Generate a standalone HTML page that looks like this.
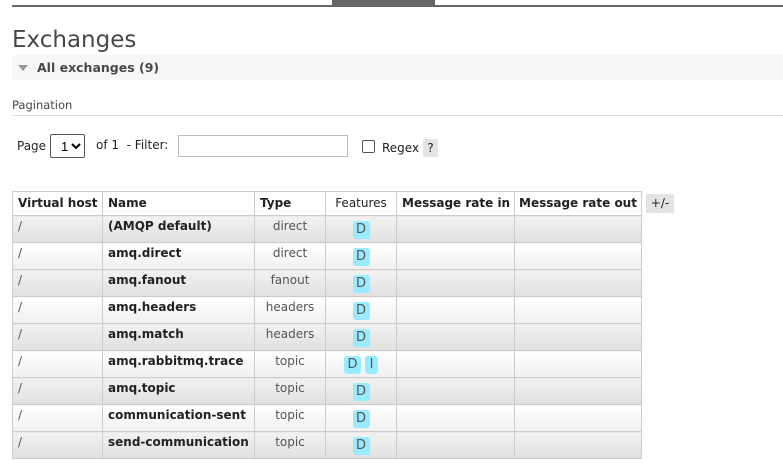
<!DOCTYPE html>
<html><head><style>
*{box-sizing:border-box;margin:0;padding:0}
body{width:783px;height:475px;overflow:hidden;background:#fff;font-family:"DejaVu Sans",Verdana,sans-serif;font-size:12px;color:#222;position:relative}
.abs{position:absolute}
.topline{left:12px;top:5px;width:771px;height:2px;background:#666}
.tab{left:332px;top:0;width:103px;height:6px;background:#666}
h1{position:absolute;left:12px;top:27px;font-weight:normal;font-size:23px;color:#484848;font-family:"DejaVu Sans",sans-serif}
.bar{left:12px;top:55px;width:771px;height:25px;background:#f7f7f7}
.bar span{position:absolute;left:25px;top:5px;font-weight:bold;font-size:12.5px;color:#484848}
.tri{position:absolute;left:6px;top:10px;width:0;height:0;border-left:5px solid transparent;border-right:5px solid transparent;border-top:6px solid #999}
.pag{left:12px;top:98px;width:771px;height:18px;border-bottom:1px solid #ddd;color:#484848;font-size:11.5px}
.ctl{top:136px;font-size:12px;color:#222}
select{position:absolute;left:50px;top:134px;width:35px;height:24px;border:1px solid #555;border-radius:2px;font-size:13px;padding-left:6px;background:#fff}
.inp{left:178px;top:135px;width:170px;height:22px;border:1px solid #bbb}
.chk{left:362px;top:140px;width:13px;height:13px;border:1px solid #555;border-radius:2px}
.q{left:423px;top:139px;width:15px;height:18px;background:#e4e4e4;text-align:center;font-size:12px;line-height:18px}
table{position:absolute;left:12px;top:191px;border-collapse:collapse;table-layout:fixed;width:629px}
td,th{border:1px solid #ccc;vertical-align:top;text-align:left;padding:3px 5px 0;height:27px;white-space:nowrap;overflow:hidden}
th{height:24px;font-weight:bold;padding-top:4px;background:#fff}
th.f{font-weight:normal;text-align:center}
tr.o td{background:linear-gradient(#f2f2f2,#e0e0e0)}
tr.e td{background:linear-gradient(#fff,#f0f0f0)}
td.n{font-weight:bold}
td.t{text-align:center;color:#555}
td.c{text-align:center;padding:5px 0 0}
td.v{color:#555}
.b{display:inline-block;width:17px;height:18px;background:#99ebff;border-radius:3px;text-align:center;line-height:18px;color:#555;margin:0 2px;font-size:13px}
.pm{left:646px;top:194px;width:28px;height:19px;background:#e4e4e4;text-align:center;line-height:19px}
</style></head><body>
<div class="abs topline"></div><div class="abs tab"></div>
<h1>Exchanges</h1>
<div class="abs bar"><div class="tri"></div><span>All exchanges (9)</span></div>
<div class="abs pag">Pagination</div>
<div class="abs ctl" style="left:17px;top:139px">Page</div>
<select><option>1</option></select>
<div class="abs ctl" style="left:96px;top:138px">of 1 &nbsp;- Filter:</div>
<div class="abs inp"></div>
<div class="abs chk"></div>
<div class="abs ctl" style="left:382px;top:141px">Regex</div>
<div class="abs q">?</div>
<table>
<colgroup><col style="width:90px"><col style="width:152px"><col style="width:71px"><col style="width:71px"><col style="width:118px"><col style="width:127px"></colgroup>
<tr><th>Virtual host</th><th>Name</th><th>Type</th><th class="f">Features</th><th>Message rate in</th><th style="padding-left:4px">Message rate out</th></tr>
<tr class="o"><td class="v">/</td><td class="n">(AMQP default)</td><td class="t">direct</td><td class="c"><span class="b">D</span></td><td></td><td></td></tr>
<tr class="e"><td class="v">/</td><td class="n">amq.direct</td><td class="t">direct</td><td class="c"><span class="b">D</span></td><td></td><td></td></tr>
<tr class="o"><td class="v">/</td><td class="n">amq.fanout</td><td class="t">fanout</td><td class="c"><span class="b">D</span></td><td></td><td></td></tr>
<tr class="e"><td class="v">/</td><td class="n">amq.headers</td><td class="t">headers</td><td class="c"><span class="b">D</span></td><td></td><td></td></tr>
<tr class="o"><td class="v">/</td><td class="n">amq.match</td><td class="t">headers</td><td class="c"><span class="b">D</span></td><td></td><td></td></tr>
<tr class="e"><td class="v">/</td><td class="n">amq.rabbitmq.trace</td><td class="t">topic</td><td class="c"><span class="b">D</span><span class="b" style="width:13px">I</span></td><td></td><td></td></tr>
<tr class="o"><td class="v">/</td><td class="n">amq.topic</td><td class="t">topic</td><td class="c"><span class="b">D</span></td><td></td><td></td></tr>
<tr class="e"><td class="v">/</td><td class="n">communication-sent</td><td class="t">topic</td><td class="c"><span class="b">D</span></td><td></td><td></td></tr>
<tr class="o"><td class="v">/</td><td class="n">send-communication</td><td class="t">topic</td><td class="c"><span class="b">D</span></td><td></td><td></td></tr>
</table>
<div class="abs pm">+/-</div>
</body></html>
